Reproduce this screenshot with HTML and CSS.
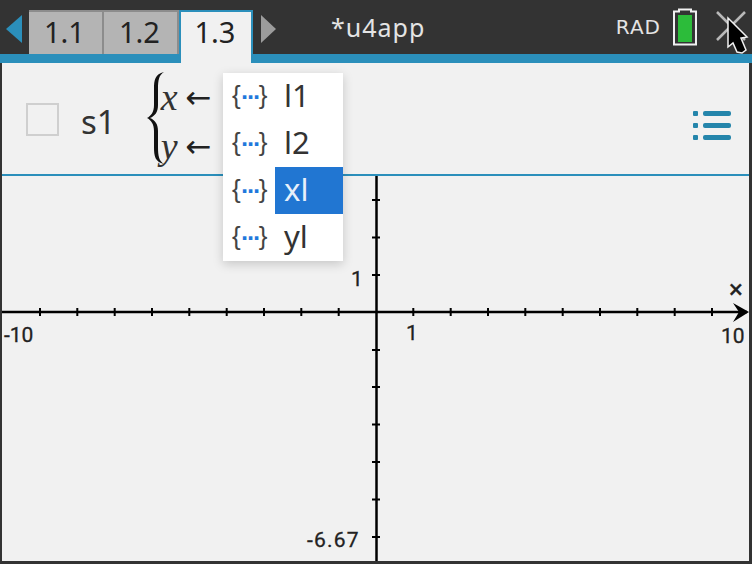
FILE: index.html
```html
<!DOCTYPE html>
<html lang="en">
<head>
    <meta charset="UTF-8">
    <meta name="viewport" content="width=device-width, initial-scale=1.0">
    <title>u4app</title>
    <link rel="stylesheet" href="styles.css">
</head>
<body>
    <div class="screen">
        <div class="topbar">
            <svg class="nav-arrow" width="17" height="28" viewBox="0 0 17 28"><polygon points="16,0 16,28 0,14" fill="#2b8fbb"/></svg>
            <div class="tabs">
                <div class="tab">1.1</div>
                <div class="tab">1.2</div>
                <div class="tab active">1.3</div>
            </div>
            <svg class="nav-arrow next" width="15" height="28" viewBox="0 0 15 28"><polygon points="0,0 0,28 15,14" fill="#9c9c9c"/></svg>
            <div class="doc-title">*u4app</div>
            <div class="mode">RAD</div>
            <svg class="battery" width="26" height="38" viewBox="0 0 26 38">
                <path d="M7 1.5h12v2h5v33H2v-33h5z" fill="#333" stroke="#f1f1f1" stroke-width="2"/>
                <rect x="6" y="7" width="14" height="27" fill="#2cbc3a"/>
            </svg>
            <svg class="close" width="36" height="44" viewBox="0 0 36 44">
                <path d="M1 4L29 32M29 4L1 32" stroke="#b9b9b9" stroke-width="2.5" fill="none"/>
                <path d="M12 10L31 29L25 30L30 42L26 45L21 44L17 35L12 39Z" fill="#000" stroke="#f1f1f1" stroke-width="1.5"/>
            </svg>
        </div>
        <div class="band"></div>
        <div class="content">
            <div class="expr">
                <div class="check"></div>
                <div class="name">s1</div>
                <svg class="brace" width="20" height="94" viewBox="0 0 20 94">
                    <path d="M18 1C9 3 8 9 8 18V34C8 41 5 45 1 47C5 49 8 53 8 60V76C8 85 9 91 18 93C13 90 12 85 12 76V60C12 53 9 49 4 47C9 45 12 41 12 34V18C12 9 13 4 18 1Z" fill="#111"/>
                </svg>
                <div class="assign">
                    <div class="assign-row"><i>x</i><span class="arrow">←</span></div>
                    <div class="assign-row"><i>y</i><span class="arrow">←</span></div>
                </div>
                <div class="list-btn">
                    <div class="list-line"></div>
                    <div class="list-line"></div>
                    <div class="list-line"></div>
                </div>
            </div>
            <svg class="graph" width="747" height="385" viewBox="2 176 747 385">
                <path class="tick" d="M40 308v8M77.3 308v8M114.7 308v8M152 308v8M189.3 308v8M226.7 308v8M264 308v8M301.3 308v8M338.7 308v8M413.3 308v8M450.7 308v8M488 308v8M525.3 308v8M562.7 308v8M600 308v8M637.3 308v8M674.7 308v8M712 308v8"/>
                <path class="tick" d="M372 200h8M372 237.6h8M372 275h8M372 350h8M372 387h8M372 424.5h8M372 462h8M372 499.5h8M372 537h8"/>
                <path class="axis" d="M2 312H747M376.5 176V561"/>
                <path d="M733 303L749 312L733 322L739 312Z" fill="#000"/>
                <text class="label" x="4" y="342">-10</text>
                <text class="label" x="351" y="286">1</text>
                <text class="label" x="406" y="340">1</text>
                <text class="label" x="721" y="343">10</text>
                <text class="label cross" x="729" y="298">×</text>
                <text class="label spaced" x="307" y="547">-6.67</text>
            </svg>
            <div class="menu">
                <div class="menu-row"><span class="list-icon">{<b>···</b>}</span><span class="menu-text">l1</span></div>
                <div class="menu-row"><span class="list-icon">{<b>···</b>}</span><span class="menu-text">l2</span></div>
                <div class="menu-row"><span class="list-icon">{<b>···</b>}</span><span class="menu-text selected">xl</span></div>
                <div class="menu-row"><span class="list-icon">{<b>···</b>}</span><span class="menu-text">yl</span></div>
            </div>
        </div>
    </div>
</body>
</html>
```

FILE: styles.css
```css
body {
    margin: 0;
    background-color: #333;
    font-family: "Noto Sans", sans-serif;
}
.screen {
    width: 752px;
    height: 564px;
    display: flex;
    flex-direction: column;
    overflow: hidden;
}
.topbar {
    height: 54px;
    display: flex;
    align-items: center;
    background-color: #333;
    position: relative;
}
.nav-arrow {
    margin-left: 6px;
    margin-top: 4px;
}
.nav-arrow.next {
    margin-left: 8px;
}
.tabs {
    display: flex;
    align-self: flex-end;
    margin-left: 6px;
    height: 44px;
}
.tab {
    width: 75px;
    box-sizing: border-box;
    padding-right: 2px;
    border-top: 2px solid #8c8c8c;
    border-right: 2px solid #8c8c8c;
    background-color: #b4b4b4;
    color: #222;
    font-size: 29px;
    line-height: 40px;
    text-align: center;
}
.tab.active {
    width: 74px;
    height: 53px;
    border: 2px solid #2b8fbb;
    border-bottom: none;
    background-color: #f1f1f1;
    position: relative;
    z-index: 1;
}
.doc-title {
    margin-left: 55px;
    width: 150px;
    color: #e4e4e4;
    font-size: 25px;
    letter-spacing: 1px;
}
.mode {
    margin-left: 135px;
    color: #e4e4e4;
    font-family: "DejaVu Sans", sans-serif;
    font-size: 20px;
    letter-spacing: 1px;
}
.battery {
    margin-left: 11px;
}
.close {
    margin-left: 18px;
    margin-top: 6px;
    overflow: visible;
}
.band {
    height: 9px;
    background-color: #2b8fbb;
}
.content {
    flex: 1;
    position: relative;
    display: flex;
    flex-direction: column;
    margin: 0 3px 3px 2px;
    background-color: #f1f1f1;
}
.expr {
    height: 111px;
    display: flex;
    align-items: center;
    border-bottom: 2px solid #2b8fbb;
}
.check {
    width: 33px;
    height: 33px;
    box-sizing: border-box;
    margin-left: 24px;
    margin-top: 2px;
    border: 2px solid #cfcfcf;
}
.name {
    margin-left: 22px;
    margin-top: 6px;
    font-size: 33px;
    color: #333;
}
.brace {
    margin-left: 30px;
    margin-top: -2px;
}
.assign {
    display: flex;
    flex-direction: column;
    gap: 9px;
    margin-left: -5px;
    margin-top: 6px;
}
.assign-row {
    display: flex;
    align-items: center;
    height: 40px;
    font-family: "Liberation Serif", serif;
    font-size: 38px;
    color: #333;
}
.arrow {
    margin-left: 8px;
    font-family: "DejaVu Sans", sans-serif;
    font-size: 31px;
    color: #222;
}
.list-btn {
    margin-left: auto;
    margin-right: 18px;
    margin-top: 14px;
    display: flex;
    flex-direction: column;
    gap: 7px;
}
.list-line {
    width: 28px;
    height: 5px;
    border-radius: 2px;
    background-color: #2485ab;
    position: relative;
    margin-left: 10px;
}
.list-line::before {
    content: "";
    position: absolute;
    left: -10px;
    top: 0;
    width: 5px;
    height: 5px;
    background-color: #2485ab;
    border-radius: 1px;
}
.graph {
    display: block;
    flex: 1;
}
.tick {
    stroke: #000;
    stroke-width: 2;
    fill: none;
}
.axis {
    stroke: #000;
    stroke-width: 2.5;
    fill: none;
}
.label {
    font-family: Roboto, sans-serif;
    font-size: 21px;
    fill: #222;
    stroke: #222;
    stroke-width: 0.3px;
}
.label.cross {
    font-size: 26px;
}
.label.spaced {
    letter-spacing: 1.2px;
}
.menu {
    position: absolute;
    left: 221px;
    top: 10px;
    width: 120px;
    height: 188px;
    background-color: #fff;
    box-shadow: 0 3px 10px rgba(0, 0, 0, 0.18);
    display: flex;
    flex-direction: column;
}
.menu-row {
    height: 47px;
    display: flex;
    align-items: center;
}
.list-icon {
    width: 52px;
    box-sizing: border-box;
    padding-left: 9px;
    font-family: "Liberation Sans", sans-serif;
    font-size: 26px;
    line-height: 47px;
    color: #444;
    white-space: nowrap;
}
.list-icon b {
    font-family: "DejaVu Sans", sans-serif;
    color: #1f78dc;
    font-size: 20px;
    letter-spacing: -1.6px;
}
.menu-text {
    flex: 1;
    height: 47px;
    padding-left: 9px;
    font-size: 31px;
    line-height: 45px;
    color: #333;
}
.menu-text.selected {
    background-color: #2176d2;
    color: #e8f0fa;
}
```
